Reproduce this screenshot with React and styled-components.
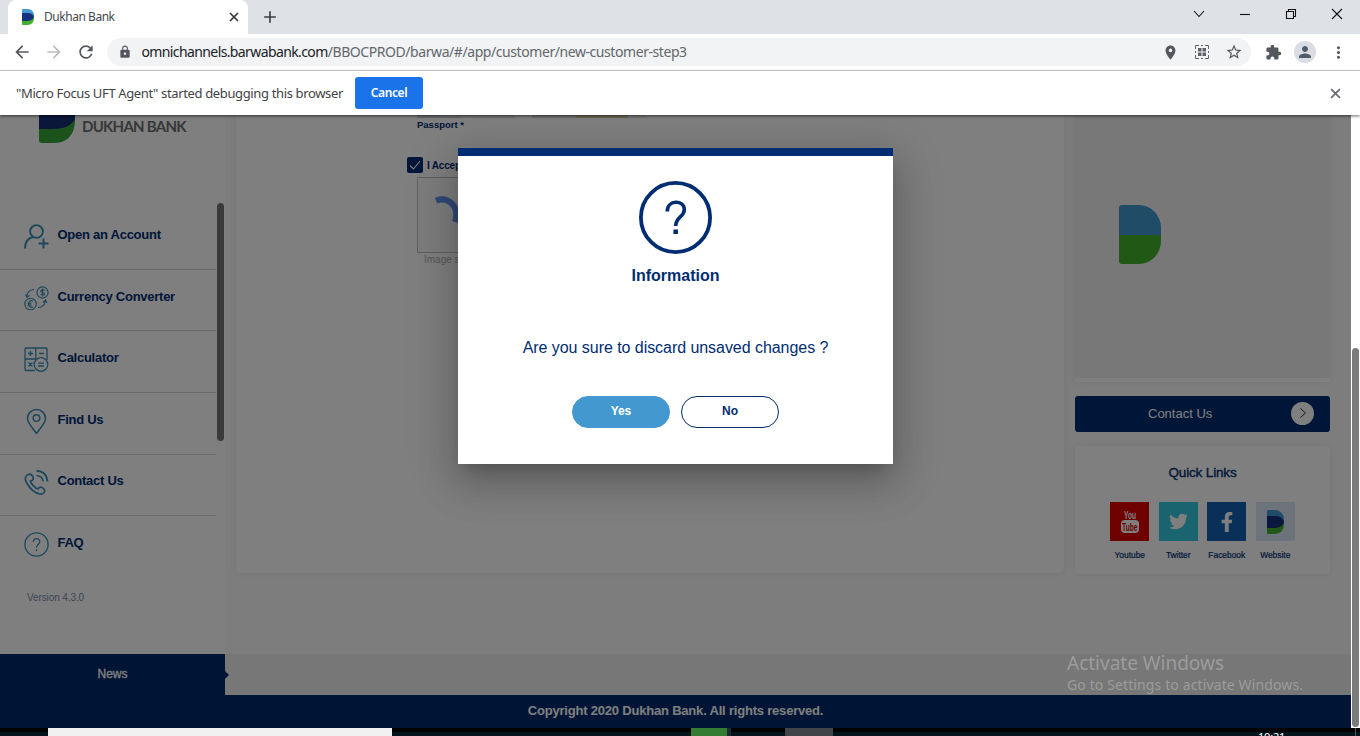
import React from "react";
import styled, { createGlobalStyle, css } from "styled-components";
import {
  MdArrowBack,
  MdArrowForward,
  MdRefresh,
  MdLock,
  MdLocationOn,
  MdStarBorder,
  MdExtension,
  MdPerson,
  MdMoreVert,
  MdAdd,
} from "react-icons/md";
import { FaTwitter, FaFacebookF } from "react-icons/fa";

const NAVY = "#002d72";
const SYSTEM = '"Noto Sans", "Open Sans", sans-serif';
const BRAND = '"Liberation Sans", Arial, sans-serif';

const GlobalStyle = createGlobalStyle`
  * { box-sizing: border-box; }
  body { margin: 0; overflow: hidden; font-family: ${BRAND}; }
  svg { display: block; flex: none; }
  button { font: inherit; border: 0; padding: 0; background: none; }
`;

const Window = styled.div`
  width: 1360px;
  height: 736px;
  display: flex;
  flex-direction: column;
  overflow: hidden;
  background: #fff;
`;

/* ---------- browser chrome ---------- */

const TabStrip = styled.div`
  height: 34px;
  flex: none;
  display: flex;
  align-items: stretch;
  padding-left: 8px;
  background: #dee1e6;
`;

const Tab = styled.div`
  width: 240px;
  display: flex;
  align-items: center;
  padding: 0 9px 0 14px;
  border-radius: 8px 8px 0 0;
  background: #fff;
  color: #45494d;
`;

const TabTitle = styled.span`
  flex: 1;
  margin-left: 10px;
  font: 12px/16px ${SYSTEM};
  letter-spacing: -0.46px;
`;

const NewTab = styled.div`
  display: flex;
  align-items: center;
  margin-left: 12px;
  color: #3c4043;
`;

const WindowControls = styled.div`
  display: flex;
  align-items: center;
  gap: 30px;
  margin: 0 15px 6px auto;

  svg:first-child { margin-right: 2px; }
`;

const Toolbar = styled.div`
  height: 37px;
  flex: none;
  display: flex;
  align-items: center;
  padding: 0 12px;
  border-bottom: 1px solid #d5d7da;
  color: #54585d;
`;

const NavButton = styled.button`
  width: 32px;
  display: flex;
  justify-content: flex-start;
  color: ${(p) => (p.$dim ? "#babcbe" : "#54585d")};
`;

const AddressBar = styled.div`
  width: 1144px;
  height: 28px;
  flex: none;
  display: flex;
  align-items: center;
  padding: 0 8px 0 11px;
  border-radius: 14px;
  background: #f1f3f4;
`;

const Url = styled.span`
  flex: 1;
  margin-left: 9px;
  font: 14px/20px ${SYSTEM};
  letter-spacing: -0.43px;
  color: #63676c;
  white-space: nowrap;
  b { font-weight: 400; color: #202124; letter-spacing: -0.61px; }
`;

const AddressActions = styled.div`
  display: flex;
  align-items: center;
  gap: 15px;
`;

const ToolbarActions = styled.div`
  flex: none;
  display: flex;
  align-items: center;
  gap: 12.5px;
  margin-left: 13.5px;
`;

const Avatar = styled.span`
  width: 22px;
  height: 22px;
  display: grid;
  place-items: center;
  border-radius: 50%;
  background: #dadde3;
  color: #4f5b6b;
`;

const InfoBar = styled.div`
  position: relative;
  z-index: 2;
  height: 44px;
  flex: none;
  display: flex;
  align-items: center;
  padding: 0 19px 0 16px;
  background: #fff;
  box-shadow: 0 1px 3px rgba(0, 0, 0, 0.6);
  color: #5f6368;
`;

const InfoText = styled.span`
  width: 339px;
  font: 13px/20px ${SYSTEM};
  letter-spacing: -0.36px;
  color: #3f4246;
  white-space: nowrap;
`;

const CancelButton = styled.button`
  width: 68px;
  height: 32px;
  margin-right: auto;
  border-radius: 3px;
  background: #1a73e8;
  color: #fff;
  font: 600 12px/16px ${SYSTEM};
  letter-spacing: -0.4px;
`;

/* ---------- web page ---------- */

const Viewport = styled.div`
  height: 613px;
  flex: none;
  display: flex;
`;

const Page = styled.div`
  position: relative;
  width: 1351px;
  height: 613px;
  display: flex;
  flex-direction: column;
  overflow: hidden;
  background: #fbfbfb;
  color: ${NAVY};
`;

const ScrollTrack = styled.div`
  width: 9px;
  padding: 233px 1px 1px;
  background: #fff;
`;

const ScrollThumb = styled.div`
  height: 379px;
  border-radius: 4px;
  background: #7b7b7b;
`;

const Body = styled.div`
  height: 539px;
  flex: none;
  display: flex;
`;

const Sidebar = styled.aside`
  width: 225px;
  flex: none;
  display: flex;
  flex-direction: column;
  background: #fff;
`;

const Brand = styled.div`
  height: 93.4px;
  flex: none;
  display: flex;
  align-items: flex-start;
  padding-left: 38px;
`;

const BrandName = styled.span`
  margin: 2px 0 0 6px;
  font: 700 15px/18px Lato, "Open Sans", sans-serif;
  letter-spacing: -0.75px;
  color: #6d6e71;
  white-space: nowrap;
`;

const MenuArea = styled.div`
  display: flex;
`;

const Menu = styled.nav`
  width: 217px;
  padding-right: 1px;
`;

const MenuItem = styled.div`
  height: 61.55px;
  display: flex;
  gap: 8.5px;
  padding: 14.6px 0 0 23px;
  border-bottom: 1px solid ${(p) => (p.$last ? "transparent" : "#d6d6d6")};
  color: #3b8fb5;
`;

const MenuLabel = styled.span`
  margin-top: 4px;
  font-size: 13px;
  font-weight: 700;
  line-height: 15px;
  letter-spacing: -0.26px;
  color: ${NAVY};
`;

const MenuThumb = styled.div`
  width: 7px;
  height: 238px;
  margin-top: -5.4px;
  border-radius: 4px;
  background: #747474;
`;

const Version = styled.div`
  padding: 14px 0 0 27px;
  font-size: 10px;
  line-height: 12px;
  letter-spacing: -0.1px;
  color: #7d8cae;
`;

const panel = css`
  background: #fff;
  box-shadow: 0 0 8px rgba(0, 0, 0, 0.08);
`;

const FormCard = styled.main`
  ${panel}
  width: 828px;
  height: 458px;
  margin-left: 11px;
  padding-left: 171px;
  border-radius: 0 0 5px 5px;
`;

const SampleStrip = styled.div`
  display: flex;
  height: 3px;
  margin-left: 10px;
`;

const Swatch = styled.span`
  width: ${(p) => p.$w}px;
  background: ${(p) => p.$c};
`;

const FieldLabel = styled.div`
  margin: 1px 0 0 10px;
  font-size: 9.5px;
  font-weight: 700;
  line-height: 11px;
`;

const AcceptRow = styled.div`
  display: flex;
  align-items: center;
  gap: 4px;
  margin-top: 27px;
  font-size: 10px;
  font-weight: 700;
  line-height: 15px;
  letter-spacing: -0.2px;
  white-space: nowrap;
`;

const Checkbox = styled.span`
  width: 16px;
  height: 16px;
  display: grid;
  place-items: center;
  border-radius: 2px;
  background: ${NAVY};
  color: #fff;
`;

const Captcha = styled.div`
  width: 150px;
  height: 76px;
  margin: 4px 0 0 10px;
  padding: 18px 0 0 17px;
  border: 1px solid #bdbdbd;
  background: #fafafa;
`;

const CaptchaHint = styled.div`
  margin: 1px 0 0 17px;
  font-size: 10px;
  line-height: 12px;
  color: #b0b0b0;
`;

const Aside = styled.aside`
  width: 255px;
  margin-left: 11px;
`;

const PromoCard = styled.div`
  height: 267px;
  padding: 90px 0 0 44px;
  background: #f0f0f0;
  border-bottom: 4px solid #fff;
  box-shadow: 0 0 8px rgba(0, 0, 0, 0.08);
`;

const ContactButton = styled.div`
  height: 36px;
  display: flex;
  align-items: center;
  justify-content: space-between;
  margin-top: 14px;
  padding: 0 16px 2px 73px;
  border-radius: 3px;
  background: ${NAVY};
  color: #fff;
  font-size: 13px;
`;

const ArrowDisc = styled.span`
  width: 23px;
  height: 23px;
  display: grid;
  place-items: center;
  border-radius: 50%;
  background: #fff;
  color: #333;
`;

const LinksCard = styled.section`
  ${panel}
  height: 128px;
  margin-top: 14px;
  padding-top: 19px;
  border-radius: 4px;
`;

const LinksTitle = styled.h2`
  margin: 0 0 22px;
  font-size: 13.5px;
  font-weight: 400;
  line-height: 15px;
  letter-spacing: -0.15px;
  text-align: center;
  -webkit-text-stroke: 0.35px ${NAVY};
`;

const LinkRow = styled.div`
  display: grid;
  grid-template-columns: repeat(4, 48.5px);
  justify-content: center;
  justify-items: center;
`;

const LinkItem = styled.div`
  display: flex;
  flex-direction: column;
  align-items: center;
  gap: 10px;
  font-size: 8.4px;
  line-height: 9px;
  -webkit-text-stroke: 0.2px ${NAVY};
`;

const LinkTile = styled.span`
  width: 39px;
  height: 39px;
  display: grid;
  place-content: center;
  background: ${(p) => p.$bg};
  color: #fff;
`;

const TubeMark = styled.span`
  display: flex;
  flex-direction: column;
  align-items: center;
  width: 18px;
  font: 700 11px/10px ${BRAND};
  -webkit-text-stroke: 0;
  span { transform: scaleX(0.6); }
`;

const TubeBox = styled.b`
  width: 18px;
  height: 13px;
  display: flex;
  justify-content: center;
  align-items: center;
  border-radius: 4px;
  background: #fff;
  color: #d60000;
`;

const NewsRow = styled.div`
  height: 41px;
  flex: none;
  display: flex;
  align-items: center;
  background: #efefef;
`;

const NewsLabel = styled.div`
  width: 225px;
  height: 41px;
  display: grid;
  place-items: center;
  padding-bottom: 2px;
  background: #002a6c;
  color: #fff;
  font-size: 12px;
  -webkit-text-stroke: 0.3px #fff;
`;

const NewsArrow = styled.span`
  border: 4px solid transparent;
  border-left-color: #002a6c;
  border-right: 0;
`;

const Footer = styled.footer`
  height: 33px;
  flex: none;
  padding-top: 8px;
  background: #002a6c;
  color: #fff;
  font-size: 13px;
  font-weight: 700;
  line-height: 15px;
  letter-spacing: -0.2px;
  text-align: center;
`;

const Backdrop = styled.div`
  position: absolute;
  inset: 0;
  display: flex;
  justify-content: center;
  align-items: flex-start;
  padding-top: 33px;
  background: rgba(0, 0, 0, 0.5);
`;

const Dialog = styled.div`
  width: 435px;
  height: 316px;
  display: flex;
  flex-direction: column;
  align-items: center;
  border-top: 8px solid ${NAVY};
  background: #fff;
  box-shadow: 0 11px 15px -7px rgba(0, 0, 0, 0.2), 0 20px 38px 3px rgba(0, 0, 0, 0.14), 0 9px 46px 8px rgba(0, 0, 0, 0.12);
`;

const QuestionBadge = styled.svg`
  width: 73px;
  height: 73px;
  margin-top: 25px;
  fill: none;
  stroke: ${NAVY};
`;

const DialogTitle = styled.h1`
  margin: 12px 0 0;
  font-size: 16px;
  font-weight: 700;
  line-height: 20px;
`;

const DialogText = styled.p`
  margin: 52px 0 0;
  font-size: 16px;
  line-height: 20px;
  letter-spacing: -0.05px;
`;

const DialogActions = styled.div`
  display: flex;
  gap: 11px;
  margin-top: 38px;
`;

const PillButton = styled.button`
  width: 98px;
  height: 32px;
  padding-bottom: 2px;
  border-radius: 16px;
  border: 1px solid ${(p) => (p.$primary ? "#4298cf" : NAVY)};
  background: ${(p) => (p.$primary ? "#4298cf" : "#fff")};
  color: ${(p) => (p.$primary ? "#fff" : NAVY)};
  font: 700 12px/14px ${BRAND};
  letter-spacing: -0.1px;
`;

const Watermark = styled.div`
  position: absolute;
  left: 1067px;
  top: 536px;
  color: #9c9c9c;
  font: 14px/19px ${SYSTEM};
  letter-spacing: 0.12px;
  white-space: nowrap;
  strong { display: block; font-size: 19px; font-weight: 400; line-height: 24px; letter-spacing: 0; }
`;

/* ---------- desktop taskbar ---------- */

const Taskbar = styled.div`
  height: 8px;
  flex: none;
  display: flex;
  overflow: hidden;
  background: linear-gradient(#000 0 4px, #03141d 4px);
`;

const TaskBlock = styled.div`
  width: ${(p) => p.$w}px;
  margin-left: ${(p) => p.$gap}px;
  background: ${(p) => p.$c};
`;

const Clock = styled.div`
  margin: 3px 0 0 425px;
  color: #fff;
  font: 11px/12px ${SYSTEM};
  letter-spacing: -0.2px;
`;

const ShowDesktop = styled.div`
  margin-left: auto;
  width: 5px;
  border-left: 1px solid #555;
`;

/* ---------- drawings ---------- */

const BankMark = ({ w, h, flat }) => (
  <svg width={w} height={h} viewBox="0 0 42 59" preserveAspectRatio="none">
    <path d="M0 29H42V36A22 23 0 0 1 20 59H3Q0 59 0 56Z" fill="#43b02a" />
    <path d="M0 3Q0 0 3 0H20A22 23 0 0 1 42 23V30H0Z" fill="#4298cf" />
    {!flat && <path d="M0 15H20C32 15 39 20 42 29C39 39 32 44 20 44H0Z" fill="#15307f" />}
  </svg>
);

const BrandMark = () => (
  <svg width="38" height="28" viewBox="0 0 38 28">
    <path d="M1 0H37V6Q36 28 15 28H4Q1 28 1 25Z" fill="#39a63b" />
    <path d="M1 0H37V4C33 11 26 14 14 14H1Z" fill="#172f72" />
  </svg>
);

const Line = ({ size = 26, w = 1.4, children }) => (
  <svg width={size} height={size} viewBox="0 0 26 26" fill="none" stroke="currentColor" strokeWidth={w}>
    {children}
  </svg>
);

const menu = [
  ["Open an Account", <Line w={1.9}><circle cx="13.5" cy="8.5" r="6.4" /><path d="M2 25.500C2 18.500 5 15 10 14M20.500 15.500v10M15.500 20.500h10" /></Line>],
  ["Currency Converter", <Line w={1.1}><circle cx="19.5" cy="7.5" r="5.6" /><circle cx="7.5" cy="19" r="5.8" /><path d="M3.8 12Q4 5 11 4.5M2.5 9.500l1.4 2.7L6.6 10.500M15 22.500Q21.5 22.500 22.5 15.500M20 17.500l2.500-2.500L24 18M10 16a3.300 3.300 0 1 0 0 6M4.5 18.200h4M4.500 20.100h4M21.500 5.700c-1-1.500-4-1-3.700.6s3.700.7 3.700 2.500-3 1.800-4 .2M19.600 3.500v8" /></Line>],
  ["Calculator", <Line w={1.3}><path d="M12 24.500H3Q2 24.500 2 23.500V3Q2 2 3 2H23Q24 2 24 3V14M2 13H13M12.800 2V13M5 7.500h5M7.500 5v5M16 7.500h5M5.500 16.500l4 4M9.500 16.500l-4 4" /><circle cx="18" cy="18.500" r="6.800" /><path d="M15 17.200h6M15 20h6" /></Line>],
  ["Find Us", <Line w={1.5}><path d="M13.500 25.500C9 19 4.500 15 4.500 10.500a9 9 0 0 1 18 0C22.500 15 18 19 13.500 25.500Z" /><circle cx="13.500" cy="10" r="3.300" /></Line>],
  ["Contact Us", <Line w={1.7}><path d="M6.500 5.200C3 5.500 1 9 3.500 13.500C7 20 12 24 17 25C21 25.500 23 22 20.500 19.500C18.500 17.500 16 17.500 15 20C12.500 19.500 8 15 7.500 12C10 11.500 11 9.500 9.700 7.200Q8.500 5.200 6.500 5.200ZM13.500 1.800Q23.500 2 24.500 12.500M13.500 6.500Q19.500 7 20 12.500" /></Line>],
  ["FAQ", <Line w={1.3}><circle cx="13.500" cy="13.500" r="11.600" /><path d="M10.300 11c0-4.500 6.700-4.300 6.500-.3-.1 2.600-3.300 2.600-3.300 6M13.500 18.300v1.600" /></Line>],
];

const QrIcon = () => (
  <svg width="16" height="16" viewBox="0 0 16 16" fill="none" stroke="#5f6368">
    <path d="M1.500 5V1.500H5M7 1.500h2M11 1.500h3.500V5M14.500 7v2M14.500 11v3.500H11M9 14.500H7M5 14.500H1.500V11M1.500 9V7" />
    <path fill="#5f6368" stroke="none" d="M4 4h3.500v3.500H4zM8.500 4H12v3.500H8.500zM4 8.500h3.500V12H4zM8.500 8.500H12V12H8.500z" />
  </svg>
);

const Glyph = ({ w, h, d }) => (
  <svg width={w} height={h} viewBox={`0 0 ${w} ${h}`} fill="none" stroke="#111" strokeWidth="1.1">
    <path d={d} />
  </svg>
);

const Cross = ({ size, color }) => (
  <svg width={size} height={size} viewBox="0 0 10 10" fill="none" stroke={color} strokeWidth="1.6">
    <path d="M1 1L9 9M9 1L1 9" />
  </svg>
);

export default function App() {
  return (
    <Window>
      <GlobalStyle />
      <TabStrip>
        <Tab>
          <BankMark w={12} h={16} />
          <TabTitle>Dukhan Bank</TabTitle>
          <NewTab><Cross size={10} color="#303336" /></NewTab>
        </Tab>
        <NewTab><MdAdd size={20} /></NewTab>
        <WindowControls>
          <Glyph w={12} h={12} d="M1 3L6 8.500L11 3" />
          <Glyph w={16} h={12} d="M3 6.500H13" />
          <Glyph w={16} h={12} d="M3.500 3.500h7v7h-7zM5.500 3.500V1.500h7v7h-2" />
          <Glyph w={16} h={12} d="M3 1L13 11M13 1L3 11" />
        </WindowControls>
      </TabStrip>
      <Toolbar>
        <NavButton><MdArrowBack size={20} /></NavButton>
        <NavButton $dim><MdArrowForward size={20} /></NavButton>
        <NavButton><MdRefresh size={20} /></NavButton>
        <AddressBar>
          <MdLock size={14} />
          <Url><b>omnichannels.barwabank.com</b>/BBOCPROD/barwa/#/app/customer/new-customer-step3</Url>
          <AddressActions>
            <MdLocationOn size={17} />
            <QrIcon />
            <MdStarBorder size={18} />
          </AddressActions>
        </AddressBar>
        <ToolbarActions>
          <MdExtension size={17} />
          <Avatar><MdPerson size={18} /></Avatar>
          <MdMoreVert size={19} />
        </ToolbarActions>
      </Toolbar>
      <InfoBar>
        <InfoText>"Micro Focus UFT Agent" started debugging this browser</InfoText>
        <CancelButton>Cancel</CancelButton>
        <Cross size={11} color="#6a6d71" />
      </InfoBar>
      <Viewport>
        <Page>
          <Body>
            <Sidebar>
              <Brand>
                <BrandMark />
                <BrandName>DUKHAN BANK</BrandName>
              </Brand>
              <MenuArea>
                <Menu>
                  {menu.map(([label, icon], i) => (
                    <MenuItem key={label} $last={i === menu.length - 1}>
                      {icon}
                      <MenuLabel>{label}</MenuLabel>
                    </MenuItem>
                  ))}
                </Menu>
                <MenuThumb />
              </MenuArea>
              <Version>Version 4.3.0</Version>
            </Sidebar>
            <FormCard>
              <SampleStrip>
                <Swatch $w={44} $c="#d3d9de" />
                <Swatch $w={54} $c="#e6e6e6" />
                <Swatch $w={17} $c="#fff" />
                <Swatch $w={44} $c="#e3e3df" />
                <Swatch $w={52} $c="#d5d3a0" />
                <Swatch $w={18} $c="#efefef" />
              </SampleStrip>
              <FieldLabel>Passport *</FieldLabel>
              <AcceptRow>
                <Checkbox>
                  <svg width="12" height="12" viewBox="0 0 12 12" fill="none" stroke="currentColor" strokeWidth="1.100"><path d="M1 6.500L4.500 10L11 2" /></svg>
                </Checkbox>
                I Accept
              </AcceptRow>
              <Captcha>
                <svg width="26" height="29" viewBox="0 0 26 29" fill="none" stroke="#6391ee" strokeWidth="6">
                  <path d="M1 4.500C14 0 25 11 20 26" />
                </svg>
              </Captcha>
              <CaptchaHint>Image size</CaptchaHint>
            </FormCard>
            <Aside>
              <PromoCard><BankMark w={42} h={59} flat /></PromoCard>
              <ContactButton>
                Contact Us
                <ArrowDisc>
                  <svg width="8" height="10" viewBox="0 0 8 10" fill="none" stroke="currentColor"><path d="M1.500 0.500L6.500 5L1.500 9.500" /></svg>
                </ArrowDisc>
              </ContactButton>
              <LinksCard>
                <LinksTitle>Quick Links</LinksTitle>
                <LinkRow>
                  <LinkItem>
                    <LinkTile $bg="#dc0000">
                      <TubeMark><span>You</span><TubeBox><span>Tube</span></TubeBox></TubeMark>
                    </LinkTile>
                    Youtube
                  </LinkItem>
                  <LinkItem><LinkTile $bg="#32c8dc"><FaTwitter size={19} /></LinkTile>Twitter</LinkItem>
                  <LinkItem><LinkTile $bg="#1260b0"><FaFacebookF size={20} /></LinkTile>Facebook</LinkItem>
                  <LinkItem><LinkTile $bg="#d8e6f4"><BankMark w={17} h={24} /></LinkTile>Website</LinkItem>
                </LinkRow>
              </LinksCard>
            </Aside>
          </Body>
          <NewsRow>
            <NewsLabel>News</NewsLabel>
            <NewsArrow />
          </NewsRow>
          <Footer>Copyright 2020 Dukhan Bank. All rights reserved.</Footer>
          <Backdrop>
            <Dialog>
              <QuestionBadge viewBox="0 0 73 73">
                <circle cx="36.500" cy="36.500" r="34.600" strokeWidth="3.800" />
                <path d="M28.300 30.500C28 18.500 45.300 18.500 45.300 28.500C45.300 36.500 36.700 35.500 36.700 45" strokeWidth="3.600" />
                <path d="M36.700 48.500V53" strokeWidth="4.600" />
              </QuestionBadge>
              <DialogTitle>Information</DialogTitle>
              <DialogText>Are you sure to discard unsaved changes ?</DialogText>
              <DialogActions>
                <PillButton $primary>Yes</PillButton>
                <PillButton>No</PillButton>
              </DialogActions>
            </Dialog>
          </Backdrop>
          <Watermark><strong>Activate Windows</strong>Go to Settings to activate Windows.</Watermark>
        </Page>
        <ScrollTrack><ScrollThumb /></ScrollTrack>
      </Viewport>
      <Taskbar>
        <TaskBlock $w={344} $gap={48} $c="#f1f0f0" />
        <TaskBlock $w={36} $gap={299} $c="#327d33" />
        <TaskBlock $w={4} $gap={0} $c="#1c2b30" />
        <TaskBlock $w={48} $gap={54} $c="#414549" />
        <Clock>10:21</Clock>
        <ShowDesktop />
      </Taskbar>
    </Window>
  );
}
